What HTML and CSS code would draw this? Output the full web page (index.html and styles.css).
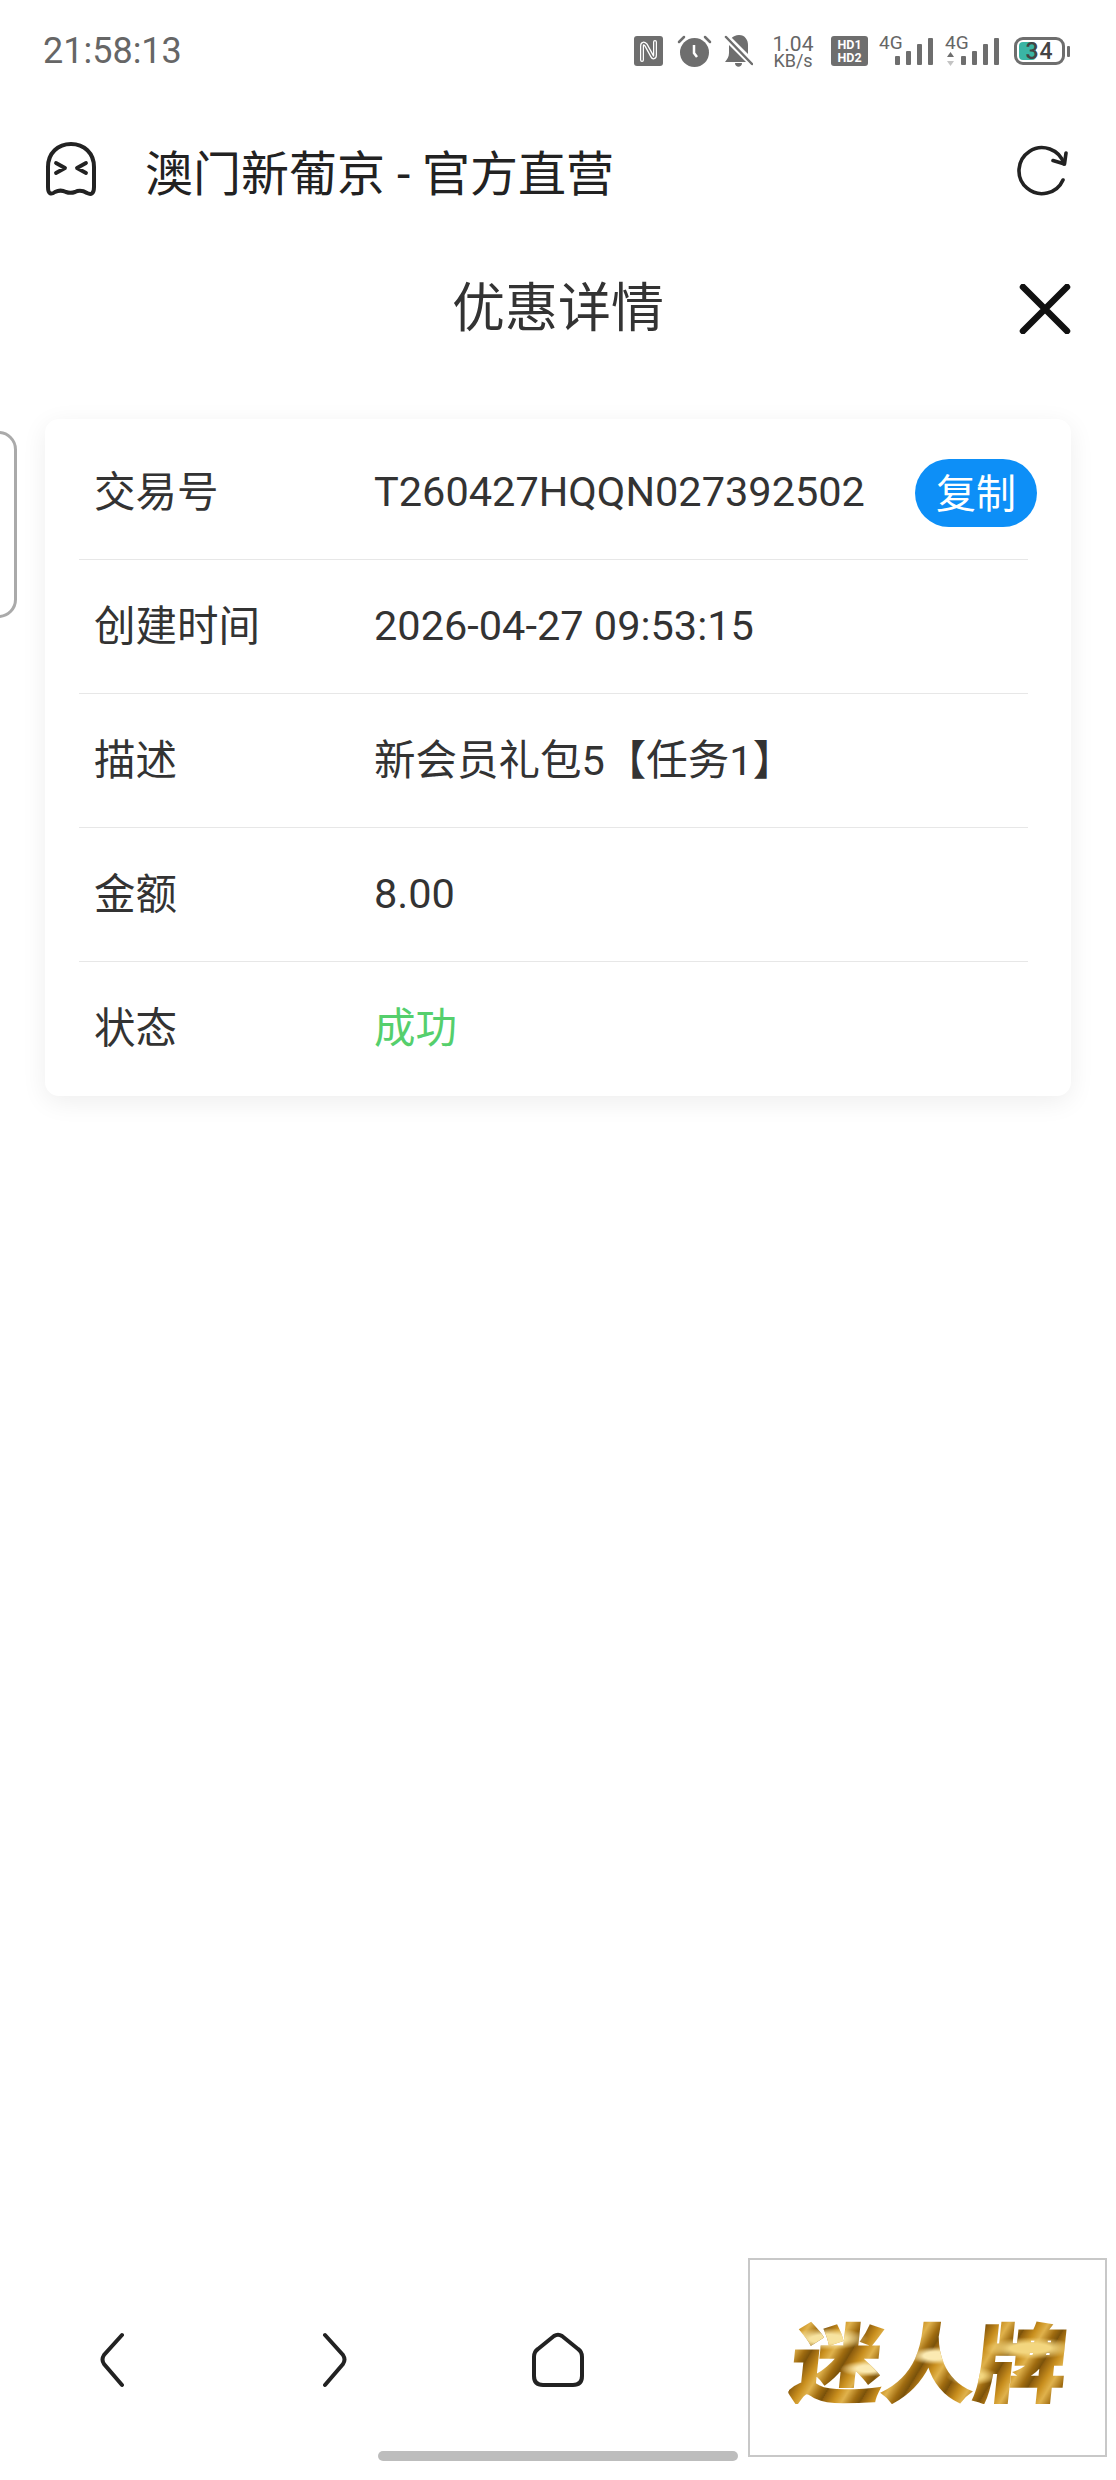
FILE: index.html
```html
<!DOCTYPE html>
<html lang="zh-CN">
<head>
<meta charset="UTF-8" />
<meta name="viewport" content="width=device-width, initial-scale=1" />
<title>优惠详情</title>
<link rel="stylesheet" href="styles.css">
</head>
<body>

<div class="statusbar">
  <span class="clock">21:58:13</span>
  <div class="indicators">
    <svg class="ic-nfc" width="29" height="30" viewBox="0 0 29 30">
      <rect width="29" height="30" rx="3" fill="#6e6e6e"/>
      <path d="M8 24V10c0-3 2-3 4-1l6 11c1 2 3 2 3-1V6" fill="none" stroke="#fff" stroke-width="4" stroke-linecap="round" stroke-linejoin="round"/>
      <path d="M8 24V10c0-3 2-3 4-1l6 11c1 2 3 2 3-1V6" fill="none" stroke="#6e6e6e" stroke-width="1.500" stroke-linecap="round" stroke-linejoin="round"/>
    </svg>
    <svg class="ic-alarm" width="35" height="32" viewBox="0 0 35 32">
      <circle cx="17.500" cy="17.500" r="14.500" fill="#6e6e6e"/>
      <path d="M2 7l5-5M33 7l-5-5" stroke="#6e6e6e" stroke-width="2.500" stroke-linecap="round"/>
      <path d="M17 10v8l3 4" fill="none" stroke="#fff" stroke-width="2.500"/>
    </svg>
    <svg class="ic-bell" width="29" height="33" viewBox="0 0 29 33">
      <path d="M7 4C9 1 12 0 15 0c6 0 9 5 9 10v9L8 3zM5 10l17 17H1c2-3 4-5 4-9zM11 28h7c0 5-7 5-7 0z" fill="#6e6e6e"/>
      <path d="M2 2l26 27" stroke="#6e6e6e" stroke-width="2.500" stroke-linecap="round"/>
    </svg>
    <div class="netspeed"><b>1.04</b><span>KB/s</span></div>
    <div class="hd"><span>HD1</span><span>HD2</span></div>
    <div class="signal">
      <span class="net">4G</span>
      <div class="bars"><i></i><i></i><i></i><i></i></div>
    </div>
    <div class="signal second">
      <span class="net">4G</span>
      <svg class="updown" width="7" height="14" viewBox="0 0 7 14">
        <path d="M3.500 0L7 5H0z" fill="#6e6e6e"/>
        <path d="M3.500 14L7 9H0z" fill="#c4c4c4"/>
      </svg>
      <div class="bars"><i></i><i></i><i></i><i></i></div>
    </div>
    <div class="battery">
      <div class="cell"><span class="charge"></span><span class="level">34</span></div>
      <span class="nub"></span>
    </div>
  </div>
</div>

<header class="appbar">
  <svg class="ghost" width="52" height="56" viewBox="0 0 52 56">
    <path d="M3 45V25C3 11 13 2 26 2s23 9 23 23v20c0 7-3 8-7 6-5-3-8-3-12-1-3 1-6 1-9 0-4-2-7-2-11 0-4 3-7 2-7-5z" fill="none" stroke="#222" stroke-width="4" stroke-linejoin="round"/>
    <path d="M11 21l9 5-9 5M41 21l-9 5 9 5" fill="none" stroke="#222" stroke-width="3.800" stroke-linecap="round" stroke-linejoin="round"/>
  </svg>
  <h1>澳门新葡京 - 官方直营</h1>
  <svg class="refresh" width="52" height="52" viewBox="0 0 52 52">
    <path d="M47 36A23 23 0 1 1 48 20" fill="none" stroke="#222" stroke-width="3.600" stroke-linecap="round"/>
    <path d="M50 9l-1.500 11L37 16.500" fill="none" stroke="#222" stroke-width="3.600" stroke-linecap="round" stroke-linejoin="round"/>
  </svg>
</header>

<div class="side-tab"></div>

<main>
  <div class="detail-head">
    <h2>优惠详情</h2>
    <svg class="close" width="52" height="50" viewBox="0 0 52 50">
      <path d="M4 3l44 44M48 3L4 47" stroke="#111" stroke-width="6.500" stroke-linecap="round"/>
    </svg>
  </div>

  <section class="card">
    <div class="row">
      <span class="label">交易号</span>
      <span class="value">T260427HQQN027392502</span>
      <button class="copy">复制</button>
    </div>
    <div class="row">
      <span class="label">创建时间</span>
      <span class="value">2026-04-27 09:53:15</span>
    </div>
    <div class="row">
      <span class="label">描述</span>
      <span class="value cjk">新会员礼包5【任务1】</span>
    </div>
    <div class="row">
      <span class="label">金额</span>
      <span class="value">8.00</span>
    </div>
    <div class="row">
      <span class="label">状态</span>
      <span class="value cjk success">成功</span>
    </div>
  </section>
</main>

<footer>
  <nav class="navbar">
    <svg width="26" height="56" viewBox="0 0 26 56">
      <path d="M23 3L5 23c-2 3-2 6 0 9l18 21" fill="none" stroke="#222" stroke-width="4" stroke-linecap="round"/>
    </svg>
    <svg width="26" height="56" viewBox="0 0 26 56">
      <path d="M3 3l18 20c2 3 2 6 0 9L3 53" fill="none" stroke="#222" stroke-width="4" stroke-linecap="round"/>
    </svg>
    <svg width="54" height="56" viewBox="0 0 54 56">
      <path d="M23 4L7 17c-3 2-4 4-4 8v19c0 6 3 9 9 9h30c6 0 9-3 9-9V25c0-4-1-6-4-8L31 4c-3-2-5-2-8 0z" fill="none" stroke="#222" stroke-width="4" stroke-linejoin="round"/>
    </svg>
  </nav>
  <div class="home-pill"></div>
</footer>

<aside class="promo"><span>迷人牌</span></aside>

</body>
</html>
```

FILE: styles.css
```css
* { box-sizing: border-box; }
html, body { margin: 0; padding: 0; }
body { position: relative; width: 1116px; height: 2480px; display: flex; flex-direction: column; background: #fff; color: #333; font-family: Roboto, "Noto Sans CJK SC", sans-serif; overflow: hidden; }

/* status bar */
.statusbar { height: 102px; display: flex; align-items: center; padding-left: 43px; }
.clock { font-size: 36px; color: #666; }
.indicators { margin-left: auto; padding-right: 46px; display: flex; align-items: center; height: 34px; color: #666; }
.ic-alarm { margin-left: 14px; }
.ic-bell { margin-left: 12px; }
.netspeed { margin-left: 20px; width: 40px; display: flex; flex-direction: column; align-items: center; }
.netspeed b { font-weight: 400; font-size: 21px; line-height: 18px; }
.netspeed span { font-size: 18px; line-height: 15px; }
.hd { margin-left: 18px; width: 37px; height: 30px; background: #6e6e6e; border-radius: 3px; color: #fff; display: flex; flex-direction: column; align-items: center; justify-content: center; font-size: 12.500px; font-weight: 700; line-height: 13px; }
.signal { position: relative; margin-left: 11px; width: 54px; height: 32px; }
.signal.second { margin-left: 12px; }
.net { position: absolute; left: 0; top: 0; font-size: 19px; line-height: 16px; }
.updown { position: absolute; left: 2px; bottom: 1px; }
.bars { position: absolute; right: 0; bottom: 2px; display: flex; align-items: flex-end; gap: 5px; }
.bars i { display: block; width: 5px; background: #6e6e6e; border-radius: 1px; }
.bars i:nth-child(1) { height: 9px; margin-right: 1px; }
.bars i:nth-child(2) { height: 14px; margin-right: 1px; }
.bars i:nth-child(3) { height: 21px; margin-right: 1px; }
.bars i:nth-child(4) { height: 27px; }
.battery { margin-left: 15px; display: flex; align-items: center; gap: 2px; }
.cell { position: relative; width: 51px; height: 28px; border: 3px solid #6e6e6e; border-radius: 9px; display: flex; align-items: center; justify-content: center; }
.charge { position: absolute; left: 2px; top: 2px; bottom: 2px; width: 17px; background: #3ab5a5; border-radius: 4px; }
.level { position: relative; font-size: 23px; font-weight: 500; color: #444; letter-spacing: 1px; line-height: 1; }
.nub { width: 3px; height: 11px; background: #6e6e6e; border-radius: 1px; }

/* browser bar */
.appbar { height: 136px; display: flex; align-items: center; padding: 0 48px 0 45px; }
.appbar h1 { margin: 0 0 0 48px; font-size: 48px; font-weight: 400; color: #222; white-space: nowrap; }
.ghost { flex-shrink: 0; }
.refresh { margin-left: auto; }

/* tab peeking in from the left edge */
.side-tab { position: absolute; left: -20px; top: 431px; width: 37px; height: 187px; border: 3px solid #aaa; border-radius: 20px; background: #fff; }

/* detail panel */
main { flex: 1; }
.detail-head { height: 132px; display: grid; grid-template-columns: 1fr auto 1fr; align-items: center; padding: 0 45px; }
.detail-head h2 { grid-column: 2; margin: 0; font-size: 53px; font-weight: 400; color: #333; }
.close { grid-column: 3; justify-self: end; margin-top: 10px; }

.card { margin: 49px 45px 0 45px; padding-top: 7px; background: #fff; border-radius: 14px; box-shadow: 0 6px 26px rgba(0, 0, 0, 0.07); }
.row { height: 134px; margin: 0 43px 0 34px; padding-left: 15px; display: flex; align-items: center; border-bottom: 1px solid #e7e7e7; font-size: 41.500px; }
.row:last-child { border-bottom: none; }
.label { width: 280px; flex-shrink: 0; margin-bottom: 8px; color: #333; }
.value { margin-bottom: 2px; color: #333; white-space: nowrap; }
.cjk { margin-bottom: 8px; }
.success { color: #55cf6c; }
.copy { margin-left: auto; margin-right: -9px; width: 122px; height: 68px; padding: 0 0 4px; border: none; border-radius: 34px; background: #0d8ff7; color: #fff; font-family: inherit; font-size: 40px; cursor: pointer; }

/* bottom navigation */
footer { height: 226px; }
.navbar { height: 170px; display: grid; grid-template-columns: repeat(5, 1fr); justify-items: center; align-items: center; padding-top: 42px; }
.home-pill { width: 360px; height: 10px; margin: 27px auto 0; background: #bdbdbd; border-radius: 5px; }

/* floating promo */
.promo { position: absolute; left: 748px; top: 2258px; width: 359px; height: 199px; border: 2px solid #c8c8c8; background: #fff; display: flex; align-items: center; justify-content: center; }
.promo span { margin-left: 6px; font-family: "Noto Sans CJK SC", sans-serif; font-size: 92px; font-weight: 900; line-height: 1.1; transform: skewX(-6deg) scaleY(0.92); white-space: nowrap; -webkit-text-stroke: 2px transparent;
  background:
    radial-gradient(ellipse at 12% 30%, #f7e3a0 0 5%, transparent 12%),
    radial-gradient(ellipse at 28% 62%, #fbeab2 0 4%, transparent 10%),
    radial-gradient(ellipse at 52% 48%, #fbeab2 0 6%, transparent 13%),
    radial-gradient(ellipse at 66% 70%, #f3d67f 0 4%, transparent 10%),
    radial-gradient(ellipse at 86% 40%, #f3d67f 0 6%, transparent 14%),
    repeating-linear-gradient(115deg, #8a5a0c 0, #c98f1e 11px, #e0b24c 19px, #a06c10 29px, #77500a 36px);
  -webkit-background-clip: text; background-clip: text; color: transparent; }
```
